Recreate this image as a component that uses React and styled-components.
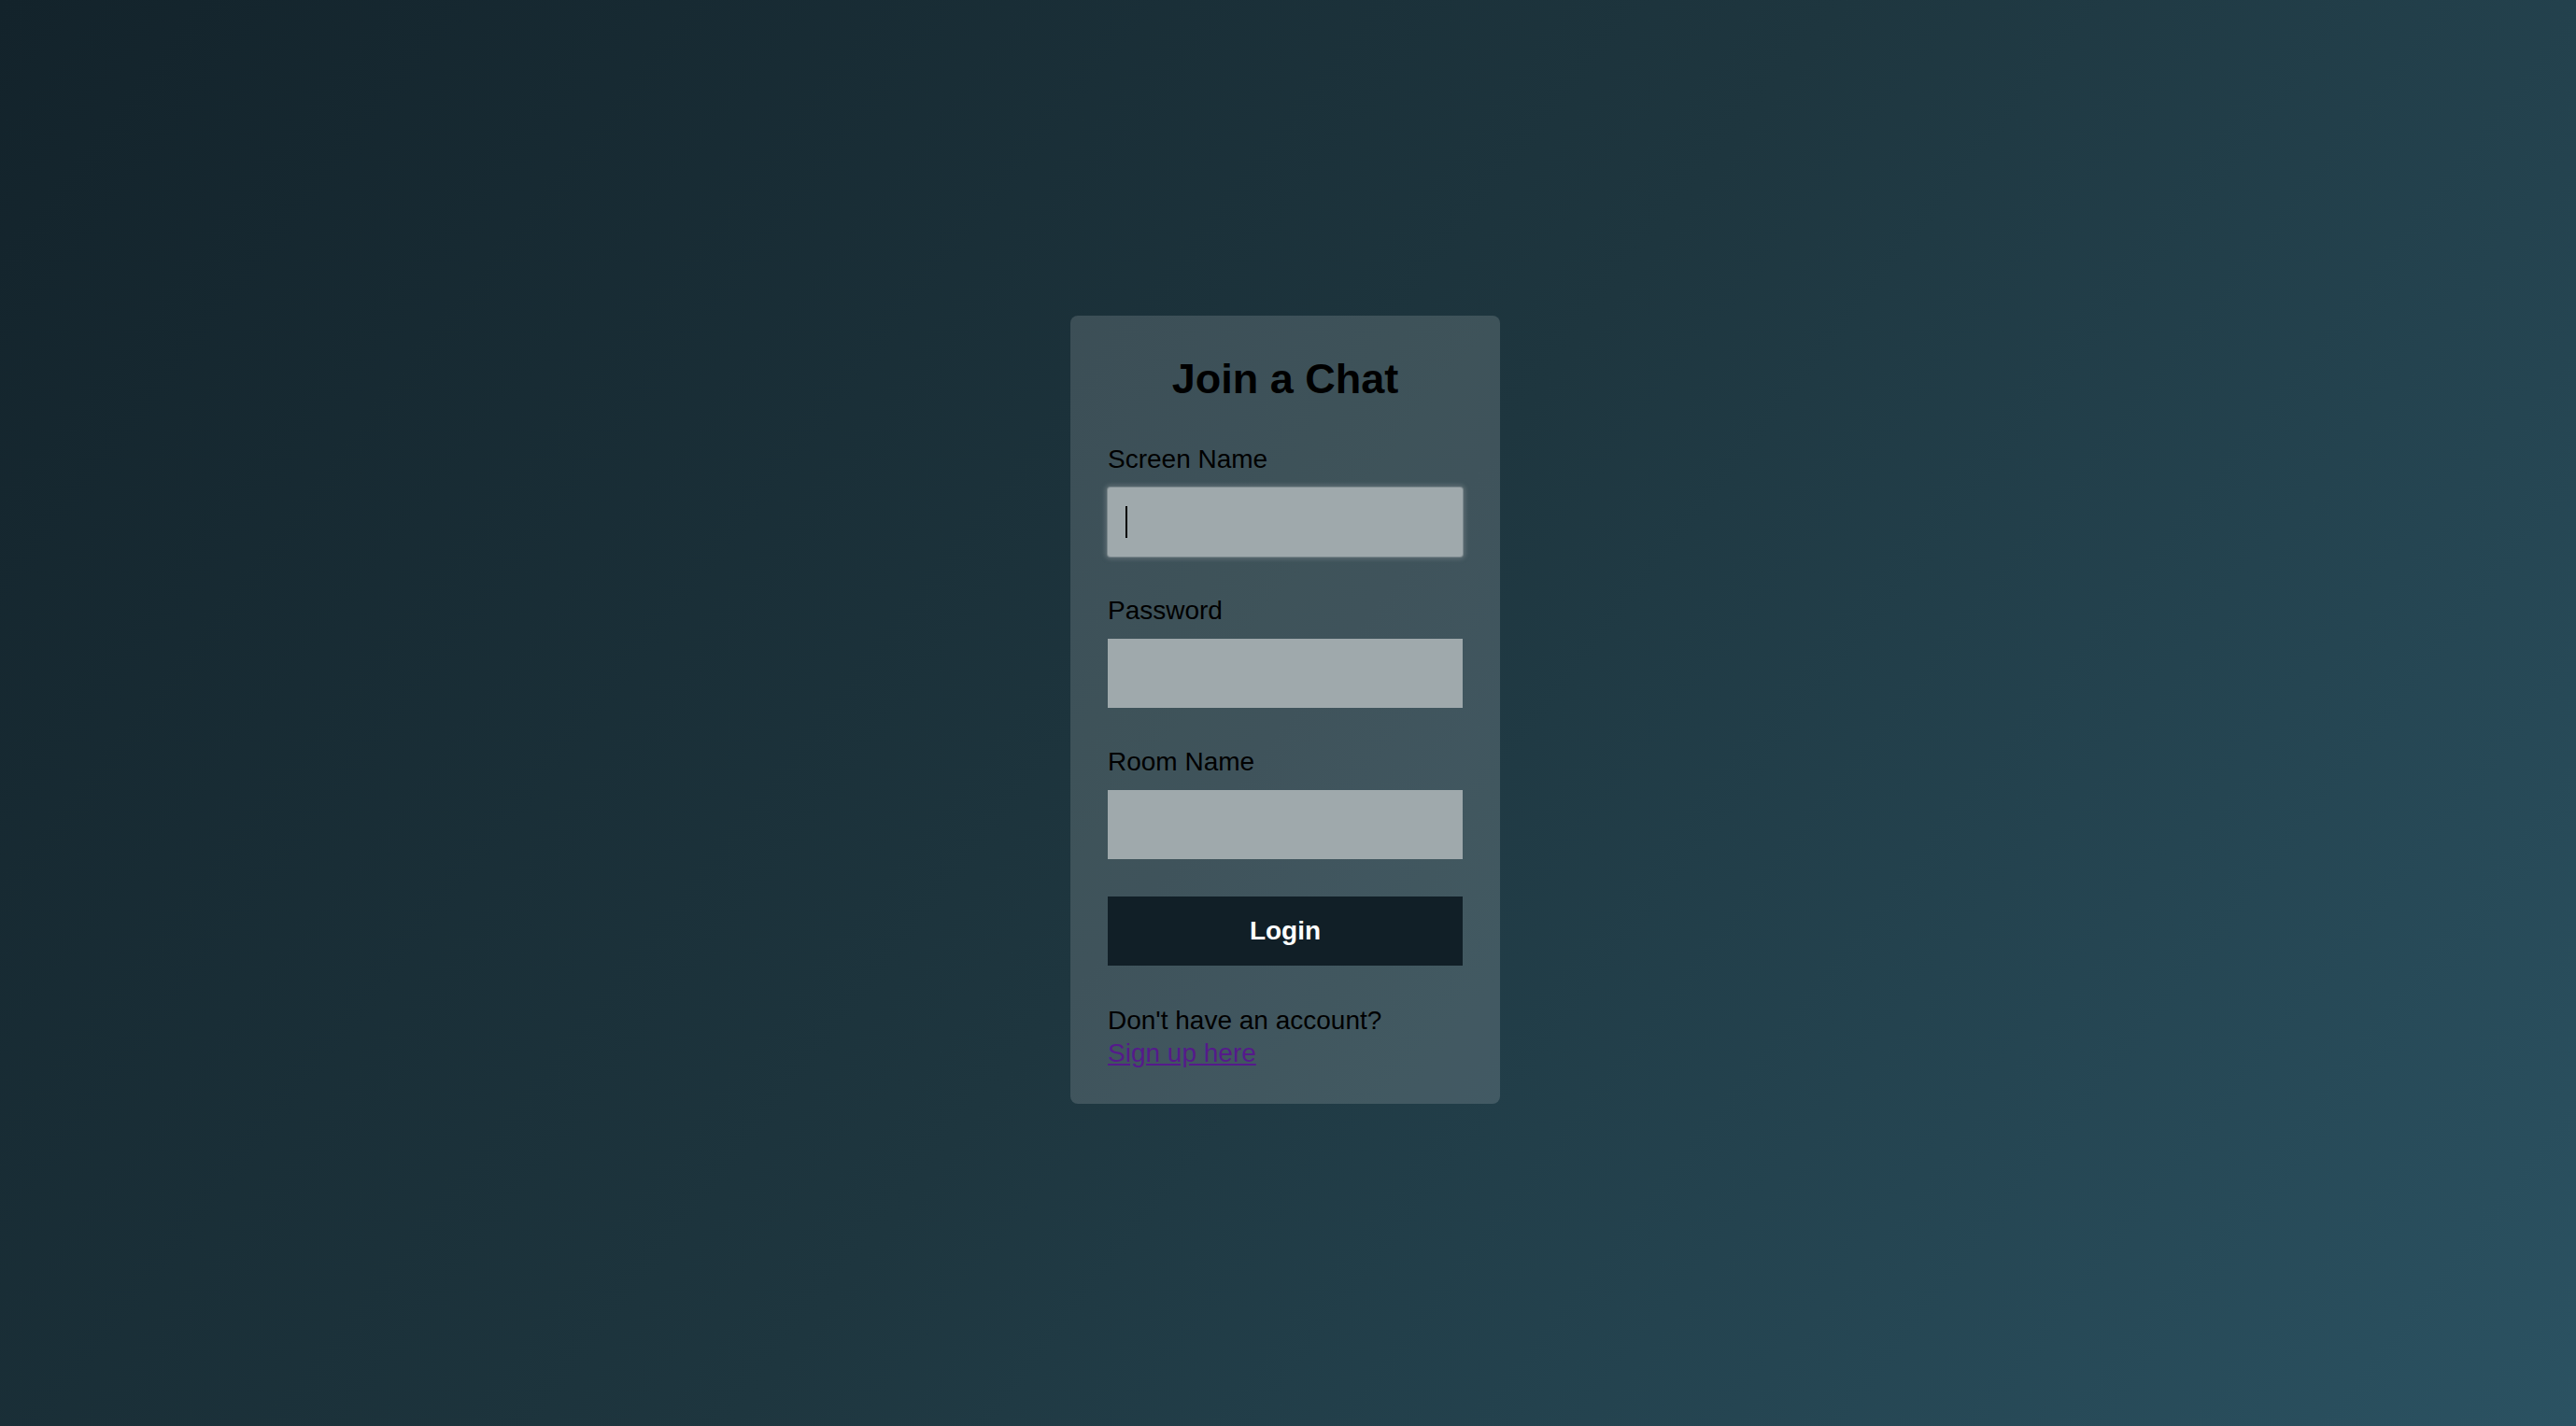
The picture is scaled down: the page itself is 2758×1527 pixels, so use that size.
import React from 'react';
import styled, { createGlobalStyle } from 'styled-components';

const GlobalStyle = createGlobalStyle`
  html, body {
    margin: 0;
    padding: 0;
  }

  body {
    font-family: 'Liberation Sans', Arial, sans-serif;
    color: #000;
  }
`;

const Page = styled.div`
  min-height: 100vh;
  display: flex;
  align-items: center;
  justify-content: center;
  background: linear-gradient(128deg, #13232b 0%, #1e363f 50%, #2b5262 100%);
`;

const Card = styled.form`
  width: 460px;
  box-sizing: border-box;
  padding: 42px 40px 37px;
  margin: 0 6px 7px 0;
  border-radius: 8px;
  background-color: rgba(255, 255, 255, 0.15);
  display: flex;
  flex-direction: column;
`;

const Title = styled.h1`
  margin: 0 0 44px;
  font-size: 45px;
  line-height: 52px;
  font-weight: 700;
  text-align: center;
`;

const Field = styled.div`
  display: flex;
  flex-direction: column;
  margin-bottom: ${(props) => (props.last ? '40px' : '42px')};
`;

const Label = styled.label`
  font-size: 28px;
  line-height: 32px;
  margin-bottom: 14px;
`;

const InputWrap = styled.div`
  position: relative;
  height: 74px;
`;

const Input = styled.input`
  width: 100%;
  height: 74px;
  box-sizing: border-box;
  border: none;
  outline: none;
  padding: 0 20px;
  font-family: inherit;
  font-size: 28px;
  background-color: #9fa9ac;
  border-radius: ${(props) => (props.focused ? '3px' : '0')};
  box-shadow: ${(props) =>
    props.focused
      ? '0 0 0 1px #7a878c, 0 0 4px 3px rgba(104, 118, 124, 0.7)'
      : 'none'};
`;

const Caret = styled.span`
  position: absolute;
  left: 19px;
  top: 20px;
  width: 2px;
  height: 34px;
  background-color: #000;
`;

const LoginButton = styled.button`
  height: 74px;
  border: none;
  background-color: #111f27;
  color: #fff;
  font-family: inherit;
  font-size: 28px;
  font-weight: 700;
  cursor: pointer;
  margin-bottom: 41px;
`;

const Footer = styled.div`
  font-size: 28px;
  line-height: 35px;
  display: flex;
  flex-direction: column;
  align-items: flex-start;
`;

const SignUpLink = styled.a`
  color: #551a8b;
  text-decoration: underline;
`;

const fields = [
  { id: 'screen', label: 'Screen Name', type: 'text', focused: true },
  { id: 'password', label: 'Password', type: 'password' },
  { id: 'room', label: 'Room Name', type: 'text' },
];

const App = () => {
  return (
    <Page>
      <GlobalStyle />
      <Card onSubmit={(e) => e.preventDefault()}>
        <Title>Join a Chat</Title>
        {fields.map((f, i) => (
          <Field key={f.id} last={i === fields.length - 1}>
            <Label htmlFor={f.id}>{f.label}</Label>
            <InputWrap>
              <Input id={f.id} type={f.type} focused={f.focused} />
              {f.focused && <Caret />}
            </InputWrap>
          </Field>
        ))}
        <LoginButton type="submit">Login</LoginButton>
        <Footer>
          <span>Don't have an account?</span>
          <SignUpLink href="#signup">Sign up here</SignUpLink>
        </Footer>
      </Card>
    </Page>
  );
};

export default App;
